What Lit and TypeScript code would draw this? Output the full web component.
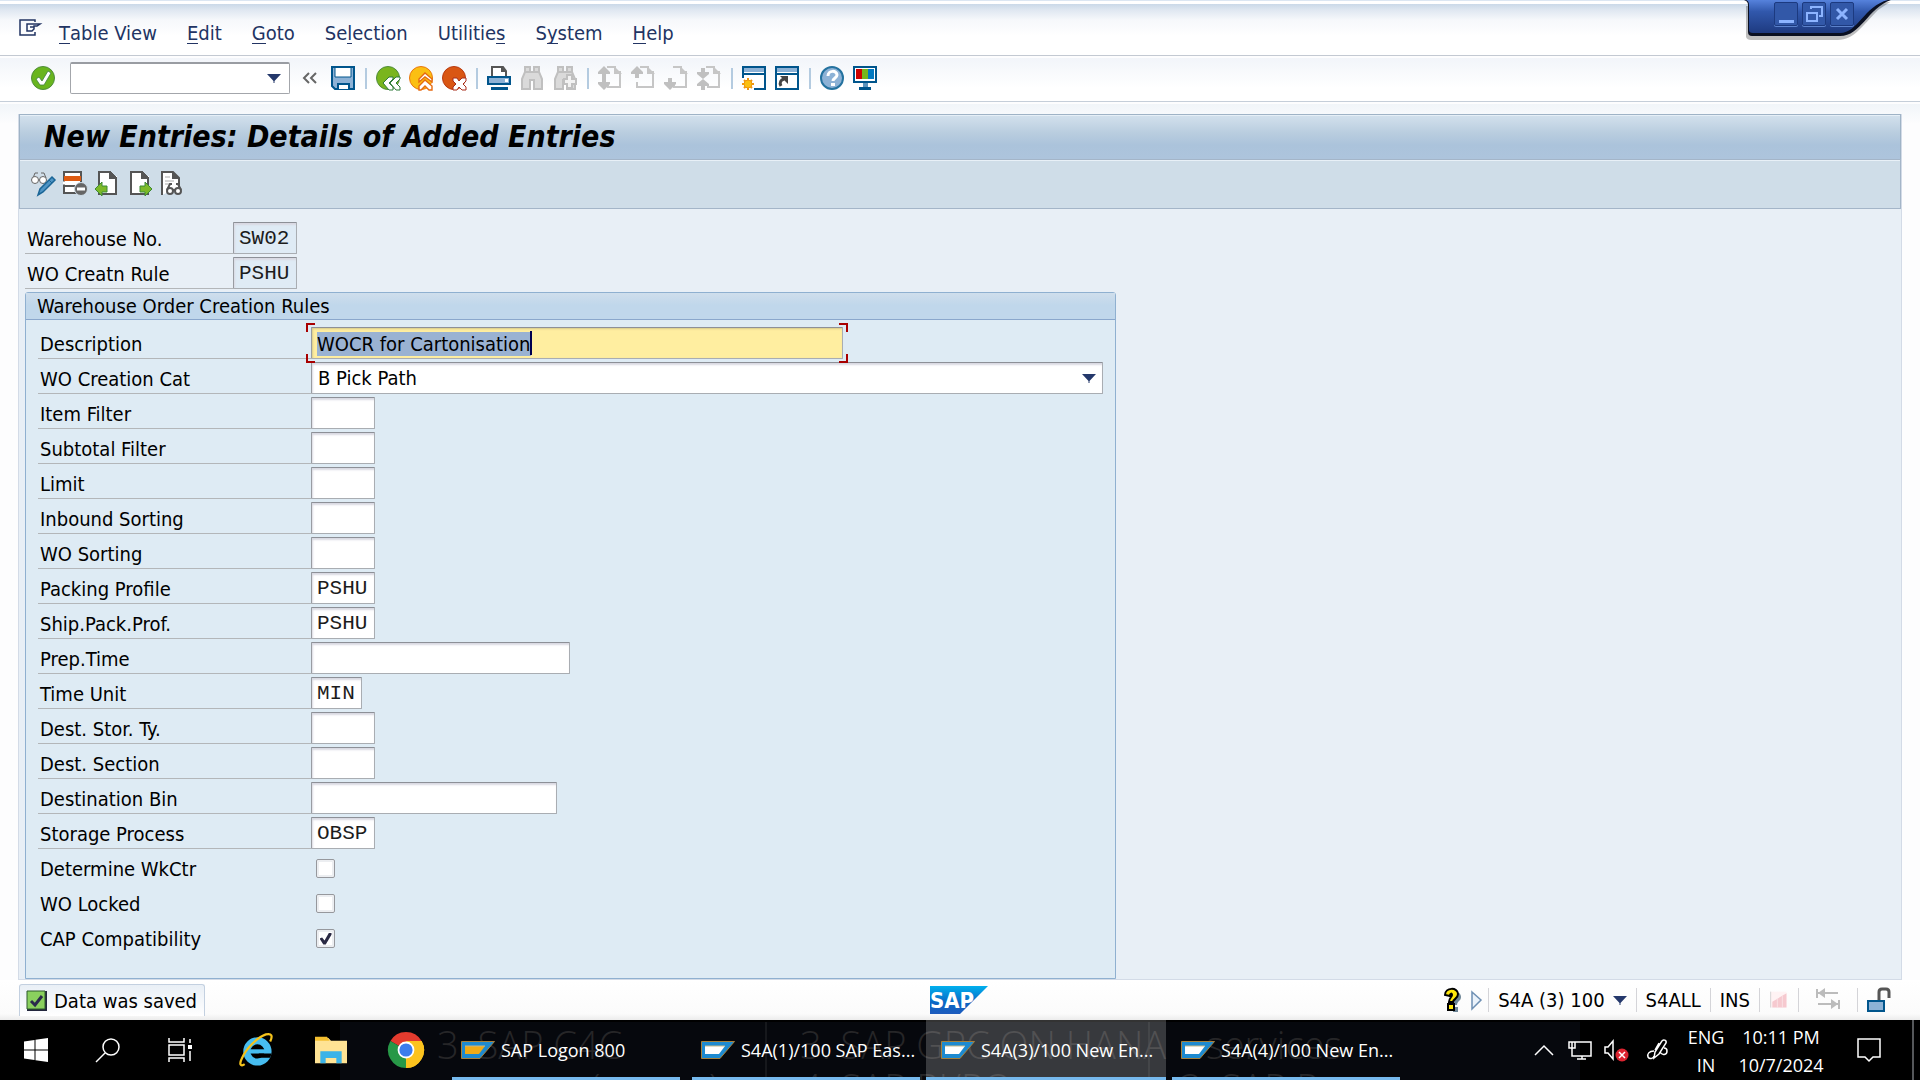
import { LitElement, html, svg, css, nothing } from "lit";
import type { SVGTemplateResult, TemplateResult } from "lit";
import { customElement, property, query } from "lit/decorators.js";

/* Icon drawings on a 24 x 24 canvas */
const page = (extra: SVGTemplateResult) => svg`
  <g shape-rendering="crispEdges">
    <path d="M3 1h14v4h5v18H3z" fill="#fff"/>
    <path d="M3 0h12l7 7v17H3zM5 2v20h15V8h-6V2z" fill="#555" fill-rule="evenodd"/>
  </g>${extra}`;

const arrowPage = (up: boolean, down: boolean) => svg`
  <path d="M9 1h8v5h5v15H${down ? 10 : 6}v-5" fill="none" stroke="#c6c6c6" stroke-width="2"/>
  <path d="M16 0l8 8h-8z" fill="#c6c6c6"/>
  ${up ? svg`<path d="M6 0l6 6v2H8v4H4V8H0V6z" fill="#c0c0c0"/>` : nothing}
  ${down ? svg`<path d="M6 24l6-6v-2H8v-4H4v4H0v2z" fill="#c0c0c0"/>` : nothing}`;

const binoculars = svg`
  <path d="M5 1h5v5h4V1h5v5l3 7v10h-8v-9h-4v9H2V13l3-7z" fill="#dadada" stroke="#c0c0c0" stroke-width="2"/>
  <path d="M5 6h5M14 6h5" stroke="#c0c0c0" stroke-width="2"/>`;

const glasses = (x: number, y: number) => svg`
  <g transform="translate(${x} ${y})" fill="#fff" stroke="#555" stroke-width="2">
    <path d="M1 7L4 1h2M15 7l-3-6h-2" fill="none"/>
    <circle cx="4" cy="8" r="3"/><circle cx="12" cy="8" r="3"/><path d="M7 7h2"/>
  </g>`;

const icons: Record<string, SVGTemplateResult> = {
  enter: svg`
    <circle cx="12" cy="12" r="11.5" fill="#69b51e" stroke="#4f8d3c"/>
    <path d="M5 13l3-2 3 4 6-10 3 2-7 12h-4z" fill="#fff" stroke="#3f8240" stroke-width=".8"/>`,
  collapse: svg`<path d="M10 7l-5 5 5 5M17 7l-5 5 5 5" fill="none" stroke="#666" stroke-width="2"/>`,
  save: svg`
    <path d="M1 1h22v22H4l-3-3z" fill="#8db2d6" stroke="#00558c" stroke-width="2"/>
    <path d="M4 2h16v9H4z" fill="#fff"/><path d="M4 1v10h16V1" fill="none" stroke="#00558c"/>
    <path d="M7 23v-5h11v5" fill="#fff" stroke="#00558c" stroke-width="2"/>`,
  back: svg`
    <circle cx="12" cy="12" r="11.5" fill="#7ab51e" stroke="#4f8d3c"/>
    <path d="M13 11h4v2l-4 4 4 4v3h-4l-6-7zM20 11h4v2l-4 4 4 4v3h-4l-6-7z" fill="#fff" stroke="#2f7a3a"/>`,
  exit: svg`
    <circle cx="12" cy="12" r="11.5" fill="#fbbf12" stroke="#ea7610"/>
    <path d="M10 16v-3l6-6 7 6v3l-7-5zM10 23v-3l6-6 7 6v4h-3l-4-4-4 4h-2z" fill="#fff" stroke="#e66a10" stroke-width="1.4"/>`,
  cancel: svg`
    <circle cx="12" cy="12" r="11.5" fill="#d95613" stroke="#b83a10"/>
    <path d="M11 12h4l2 3 3-3h4v3l-3 3 3 3v3h-4l-3-3-2 3h-4v-3l3-3-3-3z" fill="#fff" stroke="#a82d1a"/>`,
  print: svg`
    <path d="M5 11V1h11l3 4v6" fill="#fff" stroke="#555" stroke-width="2"/><path d="M14 0l6 6h-6z" fill="#555"/>
    <path d="M1 11h22v7H1z" fill="#8db2d6" stroke="#00558c" stroke-width="2"/><path d="M18 13h3v3h-3z" fill="#fff"/>
    <path d="M4 21h17v3H4z" fill="#00558c"/>`,
  find: binoculars,
  findNext: svg`${binoculars}<path d="M14 9h5v4h4v5h-4v4h-5v-4h-3v-5h3z" fill="#f2f2f2" stroke="#c0c0c0" stroke-width="2"/>`,
  firstPage: arrowPage(true, true),
  prevPage: arrowPage(true, false),
  nextPage: arrowPage(false, true),
  lastPage: svg`
    <path d="M9 1h8v5h5v15H10" fill="none" stroke="#c6c6c6" stroke-width="2"/><path d="M16 0l8 8h-8z" fill="#c6c6c6"/>
    <path d="M4 2h4v4h4v2l-6 5-6-5V6h4zM4 24h4v-4h4v-2l-6-5-6 5v2h4z" fill="#c0c0c0"/>`,
  newSession: svg`
    <path d="M1 12V1h22v22H12" fill="#fff" stroke="#00558c" stroke-width="2"/>
    <path d="M2 2h20v4H2z" fill="#8db2d6"/><path d="M1 8h22" stroke="#00558c" stroke-width="2"/>
    <path d="M6 12v12M0 18h12M2 14l8 8M10 14l-8 8" stroke="#f0960f" stroke-width="2"/>
    <circle cx="6" cy="18" r="4" fill="#fbc012" stroke="#f0960f"/>`,
  shortcut: svg`
    <path d="M1 1h22v22H1z" fill="#fff" stroke="#00558c" stroke-width="2"/>
    <path d="M2 2h20v4H2z" fill="#8db2d6"/><path d="M1 8h22" stroke="#00558c" stroke-width="2"/>
    <path d="M6 20c-2-4 0-6 3-7" fill="none" stroke="#444" stroke-width="3"/><path d="M5 10h8v8z" fill="#444"/>`,
  help: svg`
    <circle cx="12" cy="12" r="11" fill="#8db2d6" stroke="#24729f" stroke-width="2"/>
    <path d="M8 10c0-6 9-6 9-1 0 3-4 3-4 6" fill="none" stroke="#fff" stroke-width="3"/><path d="M11 17h4v3h-4z" fill="#fff"/>`,
  layout: svg`
    <path d="M1 1h22v15H1z" fill="#fff" stroke="#00558c" stroke-width="2"/>
    <path d="M3 3h6v10H3z" fill="#c00"/><path d="M9 3h6v10H9z" fill="#76b51b"/><path d="M15 3h6v10h-6z" fill="#0079c1"/>
    <path d="M10 17h5v4h-5z" fill="#5d94bd"/><path d="M6 21h12v3H6z" fill="#00558c"/>`,
  toggle: svg`
    <g fill="#fff" stroke="#666"><path d="M2 7l2-5h3M15 7l-2-5h-3" fill="none"/><circle cx="4" cy="9" r="3.500"/><circle cx="12" cy="9" r="3.500"/></g>
    <path d="M21 6l3 3-12 12-5 3 2-6z" fill="#4f94c4" stroke="#1a6596" stroke-width="1.500"/><path d="M18 9l3 3" stroke="#1a6596"/>`,
  deleteRow: svg`
    <path d="M1 1h17v21H1z" fill="#fff" stroke="#555" stroke-width="2"/><path d="M1 5h17v5H1z" fill="#dd5b12"/>
    <path d="M0 12h14" stroke="#fff" stroke-width="3"/><path d="M0 15h12" stroke="#555" stroke-width="2"/>
    <circle cx="18" cy="18" r="6.500" fill="#666" stroke="#cfdde8"/><path d="M14 18h8" stroke="#fff" stroke-width="3"/>`,
  prevEntry: page(svg`<path d="M0 18l7-7v4h5v6H7v4z" fill="#7db928" stroke="#3c8a34"/>`),
  nextEntry: page(svg`<path d="M25 18l-7-7v4h-5v6h5v4z" fill="#7db928" stroke="#3c8a34"/>`),
  display: svg`
    <path d="M3 24V1h11l6 6v9" fill="#fff" stroke="#555" stroke-width="2"/><path d="M13 0l8 8h-8z" fill="#555"/>
    <path d="M6 6h5M6 10h9M6 13h5" stroke="#aaa"/>${glasses(7, 12)}`,
  okSquare: svg`
    <path d="M2 2h20v20H2z" fill="#23263d"/><path d="M2 2h18v18H2z" fill="#8ad05e" stroke="#2c5a2c"/>
    <path d="M6 12l4 4 7-9" fill="none" stroke="#2a2a4c" stroke-width="3"/>`,
  hint: svg`
    <path d="M7 8c0-7 12-7 12 0 0 4-4 4-4 8h-4c0-5 3-5 3-8 0-1-2-1-2 1zM11 18h5v5h-5z" transform="translate(2 1)" fill="#6d8596"/>
    <path d="M5 7c0-8 13-8 13-1 0 5-5 5-5 8H9c0-4 3-5 3-7 0-2-2-2-2 1zM8 16h6v6H8z" fill="#ffe80c" stroke="#000" stroke-width="2"/>`,
  play: svg`<path d="M8 4l9 8-9 9z" fill="#eaf2fa" stroke="#6d8fb3" stroke-width="1.500"/>`,
  chart: svg`<path d="M2 2v19h19V2z" fill="#fff3f4"/><path d="M4 21V14L21 4v17z" fill="#f6c9cf"/><path d="M2 2v19" stroke="#ccc"/><path d="M10 21V10M16 21V7" stroke="#fbe6e8"/>`,
  transfer: svg`<path d="M1 1v9M1 5h21M23 21v-9M2 16h20" fill="none" stroke="#bcbcbc" stroke-width="2"/><path d="M9 0v10L2 5zM15 11v10l7-5z" fill="#bcbcbc"/>`,
  unlock: svg`<path d="M12 12V4c0-2 1-3 3-3h4c2 0 3 1 3 3v6" fill="none" stroke="#555" stroke-width="3"/><path d="M1 13h16v10H1z" fill="#8db2d6" stroke="#00558c" stroke-width="2"/>`,
  windows: svg`<path d="M0 3.400l10.500-1.500V11.500H0zM11.500 1.800L24 0v11.500H11.500zM0 12.500h10.500v9.600L0 20.600zM11.500 12.500H24V24l-12.500-1.700z" fill="#fff"/>`,
  search: svg`<circle cx="15" cy="9" r="8" fill="none" stroke="#fff" stroke-width="1.500"/><path d="M9 15L0 24" stroke="#fff" stroke-width="1.500"/>`,
  taskView: svg`<g fill="none" stroke="#fff" stroke-width="1.500"><path d="M1 0v4h15V0M1 24v-4h15v4M1 7h15v10H1zM22 1v4M22 13v10"/></g><path d="M20 7h4v4h-4z" fill="#fff"/>`,
  explorer: svg`
    <circle cx="13" cy="13" r="7.500" fill="none" stroke="#47bdf0" stroke-width="5"/><path d="M7 13h15" stroke="#47bdf0" stroke-width="3"/>
    <path d="M14 14.500h9l-1 3h-8z" fill="#000"/>
    <path d="M4 22c-3 2-4 0-2-4C5 11 13 3 19 1c4-1 5 1 3 5" fill="none" stroke="#f5c31c" stroke-width="1.600"/>`,
  folder: svg`
    <path d="M0 3h10l2 2h12v17H0z" fill="#ffe394"/><path d="M0 2h9l2 3H0z" fill="#f4bf30"/>
    <path d="M4 22v-9h16v9h-4v-4H8v4z" fill="#3bb3e8"/>`,
  chrome: svg`
    <path d="M12 12L1.600 6A12 12 0 0 1 22.400 6z" fill="#e33b2e"/><path d="M12 12l10.400-6A12 12 0 0 1 12 24z" fill="#fcc31e"/>
    <path d="M12 12v12A12 12 0 0 1 1.600 6z" fill="#279847"/><path d="M12 6h10.400A12 12 0 0 1 12 24l5-9z" fill="#fcc31e"/>
    <circle cx="12" cy="12" r="5.600" fill="#fff"/><circle cx="12" cy="12" r="4.400" fill="#3b7ded"/>`,
  chevron: svg`<path d="M3 17l9-9 9 9" fill="none" stroke="#fff" stroke-width="1.500"/>`,
  network: svg`<g fill="none" stroke="#fff" stroke-width="1.500"><path d="M6 4h17v14H4V10M1 4h6v6H1zM4 4v6M14 18v3M9 21h9"/></g>`,
  muted: svg`<path d="M1 9h3l5-6v18l-5-6H1z" fill="none" stroke="#fff" stroke-width="1.500"/><circle cx="18" cy="17" r="6.500" fill="#dc2430"/><path d="M15 14l6 6M21 14l-6 6" stroke="#fff" stroke-width="1.500"/>`,
  pen: svg`
    <g fill="none" stroke="#fff" stroke-width="1.500">
      <path d="M8 20l1-6 7-11c1-2 5-1 4 2l-7 11zM13 5l-4 7"/>
      <path d="M8 13c-5 0-7 3-6 6 2 3 6 1 6-1M14 14c2 4 7 3 7-1 0-2-1-3-3-3"/>
    </g>`,
  notice: svg`<path d="M1 1h22v18h-7l-4 4-4-4H1z" fill="none" stroke="#fff" stroke-width="1.500"/>`,
};

@customElement("sap-icon")
class SapIcon extends LitElement {
  @property() name = "";
  @property({ type: Number }) size = 24;
  static styles = css`:host { display: inline-flex; flex: none; } svg { display: block; overflow: visible; }`;
  render() {
    return html`<svg width=${this.size} height=${this.size} viewBox="0 0 24 24" aria-hidden="true">${icons[this.name] ?? nothing}</svg>`;
  }
}

type Kind = "text" | "mono" | "select" | "check" | "focus";
interface Field { id: string; label: string; kind: Kind; size?: string; value?: string; checked?: boolean; }

const keyFields: Field[] = [
  { id: "warehouse", label: "Warehouse No.", kind: "mono", size: "s4", value: "SW02" },
  { id: "rule", label: "WO Creatn Rule", kind: "mono", size: "s4", value: "PSHU" },
];

const ruleFields: Field[] = [
  { id: "description", label: "Description", kind: "focus", size: "s40", value: "WOCR for Cartonisation" },
  { id: "category", label: "WO Creation Cat", kind: "select", value: "B Pick Path" },
  { id: "item-filter", label: "Item Filter", kind: "mono", size: "s4" },
  { id: "subtotal-filter", label: "Subtotal Filter", kind: "mono", size: "s4" },
  { id: "limit", label: "Limit", kind: "mono", size: "s4" },
  { id: "inbound-sorting", label: "Inbound Sorting", kind: "mono", size: "s4" },
  { id: "wo-sorting", label: "WO Sorting", kind: "mono", size: "s4" },
  { id: "packing", label: "Packing Profile", kind: "mono", size: "s4", value: "PSHU" },
  { id: "ship-pack", label: "Ship.Pack.Prof.", kind: "mono", size: "s4", value: "PSHU" },
  { id: "prep-time", label: "Prep.Time", kind: "mono", size: "s19" },
  { id: "time-unit", label: "Time Unit", kind: "mono", size: "s3", value: "MIN" },
  { id: "dest-type", label: "Dest. Stor. Ty.", kind: "mono", size: "s4" },
  { id: "dest-section", label: "Dest. Section", kind: "mono", size: "s4" },
  { id: "dest-bin", label: "Destination Bin", kind: "mono", size: "s18" },
  { id: "process", label: "Storage Process", kind: "mono", size: "s4", value: "OBSP" },
  { id: "wkctr", label: "Determine WkCtr", kind: "check" },
  { id: "locked", label: "WO Locked", kind: "check" },
  { id: "cap", label: "CAP Compatibility", kind: "check", checked: true },
];

const caret = html`<svg class="caret" width="14" height="9" viewBox="0 0 14 9" aria-hidden="true"><path d="M0 0h14L7.500 7v2h-1V7z" fill="#24386b"/></svg>`;

/* Menu entries as [before, access key, after] */
const menus = [
  ["", "T", "able View"], ["", "E", "dit"], ["", "G", "oto"], ["Se", "l", "ection"],
  ["Utilitie", "s", ""], ["S", "y", "stem"], ["", "H", "elp"],
];

const toolGroups: [string, string, boolean?][][] = [
  [["back", "Back"], ["exit", "Exit"], ["cancel", "Cancel"]],
  [["print", "Print"], ["find", "Find", true], ["findNext", "Find next", true]],
  [["firstPage", "First page", true], ["prevPage", "Previous page", true], ["nextPage", "Next page", true], ["lastPage", "Last page", true]],
  [["newSession", "New session"], ["shortcut", "Create shortcut"]],
  [["help", "Help"], ["layout", "Customize layout"]],
];

@customElement("sap-form-row")
class SapFormRow extends LitElement {
  @property({ attribute: false }) field!: Field;
  @property({ type: Boolean }) locked = false;
  @query(".focus input") focused?: HTMLInputElement;

  static styles = css`
    :host { display: grid; grid-template-columns: var(--label-width) 1fr; height: 32px; }
    * { box-sizing: border-box; }
    .label { border-bottom: 1px solid #b3b6b9; padding: 3px 2px 0; line-height: 28px; white-space: nowrap; }
    .label.plain { border-color: transparent; }
    .box { display: block; height: 32px; border: 1px solid #a9adb2; border-top-color: #8d9097; border-left-color: #999ca2; border-radius: 1px;
      background: #fff; box-shadow: inset 1px 2px 2px #d9d9e2; color: #000; padding: 0 5px; margin: 0; outline: none; font: inherit; width: 100%; }
    .mono { font-family: "Liberation Mono", "Courier New", monospace; font-size: 21px; padding: 0 3px 0 5px; color: #1c1c1c; }
    .mono:read-only { background: #dfebf5; }
    .s3 { width: 51px; }
    .s4 { width: 64px; }
    .s18 { width: 246px; }
    .s19 { width: 259px; }
    .s40 { width: 532px; }
    .focus { position: relative; z-index: 1; }
    .focus .box { padding-top: 2px; background: #ffeea0; box-shadow: inset 1px 1px 2px #d6c98c; caret-color: #000050; }
    .focus .box::selection { background: #9ab2d2; color: #000; }
    .focus::before { content: ""; position: absolute; left: 219px; top: 4px; width: 2px; height: 24px; background: #000050; }
    .focus::after { content: ""; position: absolute; inset: -4px -5px; pointer-events: none;
      --c: linear-gradient(#a80000, #a80000);
      background: var(--c) 0 0 / 9px 2px, var(--c) 0 0 / 2px 9px, var(--c) 100% 0 / 9px 2px, var(--c) 100% 0 / 2px 9px,
        var(--c) 0 100% / 9px 2px, var(--c) 0 100% / 2px 9px, var(--c) 100% 100% / 9px 2px, var(--c) 100% 100% / 2px 9px;
      background-repeat: no-repeat; }
    .select { position: relative; margin-right: 12px; }
    .select .box { appearance: none; padding: 0 6px; }
    .caret { position: absolute; right: 7px; top: 12px; pointer-events: none; }
    .check { appearance: none; width: 19px; height: 19px; margin: 7px 5px; border: 1px solid #96989d; border-radius: 2px;
      background: #fff; box-shadow: inset 0 0 0 2px #eceef1; display: grid; place-items: center; }
    .check:checked::before { content: ""; width: 12px; height: 12px; background: #2a2a44;
      clip-path: polygon(0 50%, 22% 42%, 42% 66%, 80% 0, 100% 0, 100% 18%, 52% 100%, 32% 100%); }
  `;

  firstUpdated() {
    this.focused?.focus();
    this.focused?.select();
  }

  private control(f: Field): TemplateResult {
    switch (f.kind) {
      case "select":
        return html`<div class="select"><select class="box" id=${f.id}><option>${f.value}</option></select>${caret}</div>`;
      case "check":
        return html`<div><input class="check" type="checkbox" id=${f.id} ?checked=${!!f.checked} /></div>`;
      case "focus":
        return html`<div class="focus ${f.size}"><input class="box" id=${f.id} value=${f.value ?? ""} spellcheck="false" /></div>`;
      default:
        return html`<input class="box mono ${f.size}" id=${f.id} value=${f.value ?? ""} ?readonly=${this.locked} />`;
    }
  }

  render() {
    const f = this.field;
    return html`<label class="label ${f.kind === "check" ? "plain" : ""}" for=${f.id}>${f.label}</label>${this.control(f)}`;
  }
}

@customElement("windows-taskbar")
class WindowsTaskbar extends LitElement {
  static styles = css`
    :host { display: flex; height: 60px; background: #000; color: #fff; position: relative; overflow: hidden;
      font: 18px/24px "Open Sans", "Noto Sans", sans-serif; }
    * { box-sizing: border-box; }
    button { appearance: none; border: 0; background: none; color: inherit; font: inherit; padding: 0; margin: 0; display: flex; align-items: center; justify-content: center; }
    .ghost { position: absolute; inset: 2px 340px 0 340px; background: #06080d; color: #262628; font: 38px/56px "Open Sans", sans-serif; font-weight: 300; white-space: nowrap; }
    .ghost span { position: absolute; top: -6px; }
    .ghost .low { top: 37px; }
    .g1 { left: 97px; } .g2 { left: 460px; } .g3 { left: 866px; } .g4 { left: 250px; } .g5 { left: 840px; }
    .ghost i { position: absolute; top: 0; bottom: 0; width: 2px; background: #16181c; }
    .v1 { left: 425px; } .v2 { left: 808px; }
    .pins, .tasks, .tray { display: flex; position: relative; }
    .pins { padding-right: 11px; }
    .pins button { width: 72px; }
    .pins .app { width: 75px; padding-left: 5px; }
    .tasks { flex: 1; gap: 12px; min-width: 0; }
    .task { width: 228px; justify-content: flex-start; gap: 5px; padding: 3px 0 0 9px; border-bottom: 3px solid #76b9ed; white-space: nowrap; }
    .task.active { width: 240px; margin: 0 -6px; padding-left: 15px; background: rgba(255, 255, 255, 0.2); }
    .task svg { flex: none; }
    .tray { align-items: center; gap: 12px; padding-right: 6px; }
    .tray button { height: 60px; }
    .tray .pen { margin-left: 6px; }
    .lang, .clock { flex-direction: column; line-height: 28px; }
    .tray .lang { width: 36px; margin-left: 6px; padding-top: 2px; }
    .tray .clock { width: 90px; padding-top: 2px; }
    .notice { width: 62px; }
    .edge { width: 2px; height: 60px; background: #55575a; }
  `;

  private task(title: string, color: string, active = false) {
    return html`<button class="task ${active ? "active" : ""}">
      <svg width="35" height="18" viewBox="0 0 35 18" aria-hidden="true">
        <path d="M.5.5h33L19 17.500H.5z" fill="#1d8ad0" stroke="#a5803c"/>
        <path d="M4 5h20l-6 8H4z" fill=${color}/><path d="M4 5h20" stroke="#c8b888"/>
      </svg><span>${title}</span></button>`;
  }

  render() {
    return html`
      <div class="ghost" aria-hidden="true">
        <i class="v1"></i><i class="v2"></i>
        <span class="g1">3. SAP C4C</span><span class="g2">3. SAP GPC ON HANA</span><span class="g3">services</span>
        <span class="g4 low">( &nbsp; &nbsp; &nbsp; &nbsp; &nbsp;&nbsp;)</span><span class="g2 low">4. SAP PI/PO</span><span class="g5 low">3. SAP P</span>
      </div>
      <div class="pins">
        <button aria-label="Start"><sap-icon name="windows"></sap-icon></button>
        <button aria-label="Search"><sap-icon name="search"></sap-icon></button>
        <button aria-label="Task View"><sap-icon name="taskView"></sap-icon></button>
        <button class="app" aria-label="Internet Explorer"><sap-icon name="explorer" size="34"></sap-icon></button>
        <button class="app" aria-label="File Explorer"><sap-icon name="folder" size="32"></sap-icon></button>
        <button class="app" aria-label="Chrome"><sap-icon name="chrome" size="36"></sap-icon></button>
      </div>
      <div class="tasks">
        ${this.task("SAP Logon 800", "#f0ab17")}
        ${this.task("S4A(1)/100 SAP Eas...", "#fff")}
        ${this.task("S4A(3)/100 New En...", "#fff", true)}
        ${this.task("S4A(4)/100 New En...", "#fff")}
      </div>
      <div class="tray">
        <button aria-label="Hidden icons"><sap-icon name="chevron"></sap-icon></button>
        <button aria-label="Network"><sap-icon name="network"></sap-icon></button>
        <button aria-label="Volume"><sap-icon name="muted"></sap-icon></button>
        <button class="pen" aria-label="Pen"><sap-icon name="pen"></sap-icon></button>
        <button class="lang"><span>ENG</span><span>IN</span></button>
        <button class="clock"><span>10:11 PM</span><span>10/7/2024</span></button>
        <button class="notice" aria-label="Notifications"><sap-icon name="notice"></sap-icon></button>
        <div class="edge"></div>
      </div>`;
  }
}

@customElement("app-root")
class AppRoot extends LitElement {
  static styles = css`
    :host { display: flex; flex-direction: column; min-height: 100vh; background: #fdfdfe; color: #000;
      font: 20px/28px "DejaVu Sans Condensed", Tahoma, sans-serif; }
    * { box-sizing: border-box; }
    button { appearance: none; border: 0; background: none; color: inherit; font: inherit; padding: 0; margin: 0; display: flex; align-items: center; }
    .menubar { display: flex; gap: 30px; height: 56px; padding: 10px 19px 0; border-bottom: 1px solid #c3c9d2; color: #223463;
      background: linear-gradient(#dbe6f2 0 1px, #fff 1px 4px, #cad8e8 4px, #dfe7f1 10px, #f6f8fb 20px, #fff 36px); align-items: center; }
    .menubar .system { margin-right: -14px; align-self: flex-start; padding-top: 9px; }
    u { text-decoration: none; border-bottom: 1px solid #223463; display: inline-block; line-height: 20px; }
    .toolbar { display: flex; align-items: center; height: 44px; margin-top: 2px; padding: 0 31px 3px; border-bottom: 1px solid #c5ced9;
      background: linear-gradient(#f2f5fa, #fff 30px); }
    .toolbar .command { display: flex; position: relative; width: 220px; margin: 0 9px 0 15px; }
    .command input { width: 100%; height: 32px; border: 1px solid #a3a6ab; border-top: 2px solid #999ca2; border-radius: 2px; background: #fff; font: inherit; padding: 0 30px 0 5px; }
    .command button { position: absolute; right: 9px; top: 12px; }
    .toolbar .save { margin-left: 8px; }
    .group { display: flex; gap: 9px; margin-left: 10px; padding-left: 11px; position: relative; }
    .group::before { content: ""; position: absolute; left: 0; top: 2px; width: 2px; height: 21px; background: #b4cbe0; }
    .frame { flex: 1; display: flex; flex-direction: column; margin-top: 2px; padding: 10px 18px 0; background: linear-gradient(#f1f5f9, #fdfdfe 20px); }
    main { flex: 1; display: flex; flex-direction: column; background: #e8eff6; border: solid #d3dbe7; border-width: 0 1px 1px; }
    h1 { margin: 0; height: 45px; padding: 0 24px; border: 1px solid #9fb3c6; border-bottom: 0; box-shadow: inset 0 1px #e6eff7;
      background: linear-gradient(#d3e1ed, #b9cddf 18px, #abc3db 30px, #adc4dc 44px); font-size: 30px; line-height: 43px; font-style: italic; font-weight: bold; white-space: nowrap; }
    .actions { display: flex; gap: 8px; height: 50px; padding: 0 11px 3px; align-items: center; background: #cfdde8; border: 1px solid #a4b5c8; box-shadow: inset 0 1px #e8f0f7; }
    .form { flex: 1; display: flex; flex-direction: column; gap: 3px; padding: 13px 6px 0; --label-width: 208px; }
    fieldset { flex: 1; display: flex; flex-direction: column; gap: 3px; width: min(100%, 1091px); margin: 0; padding: 0 0 23px; border: 1px solid #8fb0d0; border-radius: 3px 3px 0 0;
      background: #deebf4; --label-width: 273px; min-width: 0; }
    .rows { display: flex; flex-direction: column; gap: 3px; padding: 4px 0 0 12px; }
    h2 { margin: 0; height: 27px; padding: 0 11px; border-bottom: 1px solid #8aa7cc; background: linear-gradient(#cfdeec, #c0d7eb 12px); font-size: 20px; line-height: 26px; font-weight: normal; }
    .status { display: flex; align-items: center; height: 40px; padding: 0 20px 0 19px; background: linear-gradient(#fff, #fbfbfb 34px, #ececec); position: relative; }
    .message { display: flex; gap: 5px; align-items: center; height: 32px; padding: 0 7px 0 5px; border: 1px solid #c3d0e0; border-bottom: 0; border-radius: 3px 3px 0 0; background: linear-gradient(#e9eff6, #fff); }
    .logo { position: absolute; left: 930px; top: 6px; }
    .info { margin-left: auto; display: flex; align-items: center; height: 28px; }
    .info > .cell { display: flex; align-items: center; gap: 8px; border-left: 1px solid #d4d4d8; padding: 0 9px; height: 24px; }
    .info > .wide { padding: 0 17px; }
    .window { position: absolute; right: 20px; top: 0; width: 160px; height: 44px; }
    .window .shape { position: absolute; inset: 0; }
    .window .buttons { position: absolute; left: 34px; top: 2px; display: flex; gap: 4px; }
    .window button { border: 1px solid #1c3a80; width: 24px; height: 24px; border-radius: 2px; background: #3258a8; justify-content: center; box-shadow: 0 1px #5c82cc; }
  `;

  private windowControls() {
    return html`<div class="window">
      <svg class="shape" width="160" height="44" viewBox="0 0 160 44" aria-hidden="true">
        <defs><linearGradient id="w" x2="0" y2="1"><stop offset="0" stop-color="#5682dc"/><stop offset=".35" stop-color="#3158ac"/><stop offset="1" stop-color="#1e3a80"/></linearGradient></defs>
        <path d="M6 6v31q1 3 5 3H98c16 0 24-14 40-30L150 2z" fill="#000" opacity=".25"/>
        <path d="M4 0q4 1 4 5v27q0 4 4 4H100C122 36 128 6 154-1z" fill="#0a1022"/>
        <path d="M6 0q3 1 3 5v25q0 3 4 3H100C118 33 124 6 148 0z" fill="url(#w)"/>
      </svg>
      <div class="buttons">
        <button aria-label="Minimize"><svg width="20" height="20"><path d="M3 16h15v3H3z" fill="#8db4ff"/></svg></button>
        <button aria-label="Restore"><svg width="20" height="20" fill="none" stroke="#8db4ff" stroke-width="2"><path d="M7 5V3h11v9h-3M3 9h10v8H3z"/></svg></button>
        <button aria-label="Close"><svg width="20" height="20"><path d="M5 5l10 10M15 5L5 15" stroke="#8db4ff" stroke-width="3"/></svg></button>
      </div></div>`;
  }

  render() {
    return html`
      <nav class="menubar" aria-label="Menu">
        <button class="system" aria-label="System menu">
          <svg width="24" height="18" viewBox="0 0 24 18" aria-hidden="true" fill="none" stroke="#223463">
            <path d="M16 3V1H1v15h15v-3" stroke-width="1.500"/><path d="M8 5h13l-3 2h-3v3l-2 2H8z" stroke-width="1.500"/><path d="M11 8h4" stroke-width="1.500"/>
          </svg>
        </button>
        ${menus.map(([a, k, b]) => html`<button><span>${a}<u>${k}</u>${b}</span></button>`)}
      </nav>
      ${this.windowControls()}
      <div class="toolbar">
        <button aria-label="Enter"><sap-icon name="enter"></sap-icon></button>
        <div class="command"><input aria-label="Command" /><button aria-label="Show commands">${caret}</button></div>
        <button aria-label="Collapse"><sap-icon name="collapse"></sap-icon></button>
        <button class="save" aria-label="Save"><sap-icon name="save"></sap-icon></button>
        ${toolGroups.map((g) => html`<div class="group">${g.map(([icon, label, off]) =>
          html`<button aria-label=${label} ?disabled=${!!off}><sap-icon name=${icon}></sap-icon></button>`)}</div>`)}
      </div>
      <div class="frame">
        <main>
          <h1>New Entries: Details of Added Entries</h1>
          <div class="actions">
            <button aria-label="Display or change"><sap-icon name="toggle"></sap-icon></button>
            <button aria-label="Delete"><sap-icon name="deleteRow"></sap-icon></button>
            <button aria-label="Previous entry"><sap-icon name="prevEntry"></sap-icon></button>
            <button aria-label="Next entry"><sap-icon name="nextEntry"></sap-icon></button>
            <button aria-label="Display details"><sap-icon name="display"></sap-icon></button>
          </div>
          <form class="form">
            ${keyFields.map((f) => html`<sap-form-row .field=${f} locked></sap-form-row>`)}
            <fieldset aria-label="Warehouse Order Creation Rules">
              <h2>Warehouse Order Creation Rules</h2>
              <div class="rows">${ruleFields.map((f) => html`<sap-form-row .field=${f}></sap-form-row>`)}</div>
            </fieldset>
          </form>
        </main>
      </div>
      <footer class="status">
        <div class="message" role="status"><sap-icon name="okSquare"></sap-icon><span>Data was saved</span></div>
        <svg class="logo" width="58" height="28" viewBox="0 0 58 28" role="img" aria-label="SAP">
          <defs><linearGradient id="s" x2="0" y2="1"><stop offset="0" stop-color="#00b0ee"/><stop offset=".6" stop-color="#0a66c4"/><stop offset="1" stop-color="#1e5bbd"/></linearGradient></defs>
          <path d="M0 0h58L30 28H0z" fill="url(#s)"/>
          <text x="0" y="22" fill="#fff" font-family="DejaVu Sans Condensed" font-weight="bold" font-size="22">SAP</text>
        </svg>
        <div class="info">
          <button aria-label="Hint"><sap-icon name="hint"></sap-icon></button>
          <button aria-label="Expand"><sap-icon name="play"></sap-icon></button>
          <button class="cell">S4A (3) 100 ${caret}</button>
          <div class="cell">S4ALL</div>
          <div class="cell">INS</div>
          <div class="cell"><sap-icon name="chart" size="20"></sap-icon></div>
          <div class="cell wide"><sap-icon name="transfer"></sap-icon></div>
          <div class="cell"><sap-icon name="unlock"></sap-icon></div>
        </div>
      </footer>
      <windows-taskbar></windows-taskbar>`;
  }
}
